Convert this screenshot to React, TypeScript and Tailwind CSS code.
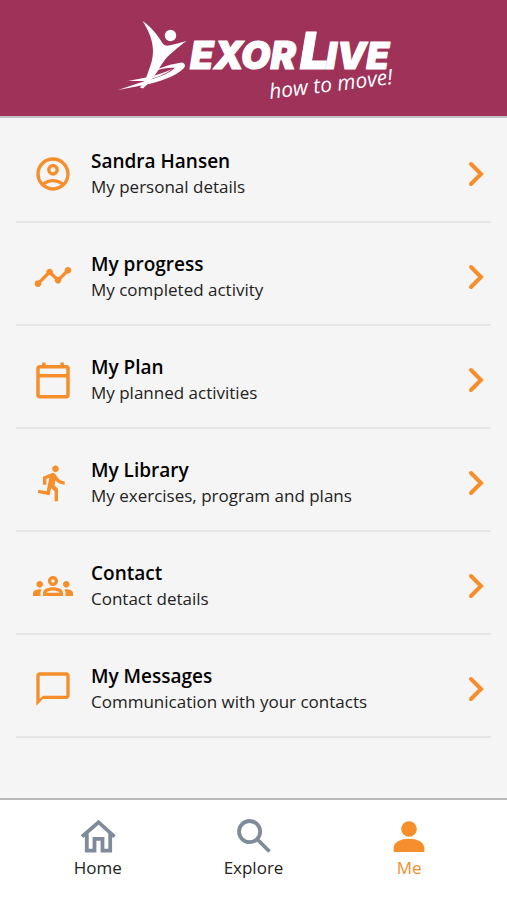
import React, { useState } from 'react';
import {
  MdChatBubbleOutline,
  MdDirectionsRun,
  MdOutlineAccountCircle,
  MdOutlineGroups,
  MdTimeline,
} from 'react-icons/md';

interface MenuItem {
  id: string;
  title: string;
  description: string;
  icon: React.ReactNode;
}

interface Tab {
  id: string;
  label: string;
  icon: React.ReactNode;
}

const CalendarIcon: React.FC = () => (
  <svg width="40" height="40" viewBox="0 0 24 24" fill="none" stroke="currentColor" strokeWidth="2.1" aria-hidden="true">
    <rect x="3" y="4" width="18" height="18" rx="1" />
    <path d="M3 9.500h18M6.500 1.500V4M17.500 1.500V4" />
  </svg>
);

const HomeIcon: React.FC = () => (
  <svg width="36" height="36" viewBox="0 0 36 36" fill="none" stroke="currentColor" strokeWidth="3.8" aria-hidden="true">
    <path d="M2 18.600 18.500 4.200l16 14.400" />
    <path d="M6.800 15.500v17.200h7.700V20.800h8v11.900h7.700V15.500" />
  </svg>
);

const SearchIcon: React.FC = () => (
  <svg width="36" height="36" viewBox="0 0 36 36" fill="none" stroke="currentColor" strokeWidth="3.8" aria-hidden="true">
    <circle cx="13.600" cy="13.600" r="10.600" />
    <path d="M21 21l12.500 12.500" />
  </svg>
);

const PersonIcon: React.FC = () => (
  <svg width="36" height="36" viewBox="0 0 36 36" fill="currentColor" aria-hidden="true">
    <circle cx="18" cy="11" r="7.800" />
    <path d="M2.600 30.500c0-6.400 7-9.700 15.400-9.700s15.400 3.300 15.400 9.700v1.900c0 1-.7 1.700-1.700 1.700H4.300c-1 0-1.700-.7-1.700-1.700z" />
  </svg>
);

const ChevronIcon: React.FC = () => (
  <svg className="shrink-0" width="16" height="28" viewBox="0 0 16 28" fill="none" stroke="currentColor" strokeWidth="4" strokeLinecap="round" aria-hidden="true">
    <path d="M3 4l10 10L3 24" />
  </svg>
);

const Logo: React.FC = () => (
  <svg width="280" height="90" viewBox="0 0 280 90" fill="white" role="img" aria-label="ExorLive how to move!">
    <circle cx="56.500" cy="20.500" r="5.700" />
    <path d="M28.500 6C36 11 43 19 48 27.500c2 3 4 3.500 7 3 6-1 11-3 17.500-4.500C67 30 63 33 60 36c-5 4-8 7-11 11.500-3 4-4 7-7 11-4 6-8 10-13 15l-3-1c4-5 6-9 8-15 3-8 5-14 5-21C39 26 35 16 28.500 6z" />
    <path d="M39 57c8-5 18-8 29-9.500 2.500.5 4 3 2 5.500C61 62 46 66.500 30 70L4 75l24-8c15-4 27-8 33-14.200-8-.3-15 1-22 4.200z" />
    <path d="M58 54c-6 5-14 8-23 10.500L30 66H14l18-3.500c9-1.800 18-4.500 26-8.500z" />
    <g fontFamily="Inter, sans-serif" fontWeight="900" fontStyle="italic" stroke="white" strokeWidth="1" strokeLinejoin="round">
      <text x="76" y="54" fontSize="38">EXOR</text>
      <text x="186" y="54" fontSize="51">L</text>
      <text x="212" y="54" fontSize="37">IVE</text>
    </g>
    <text x="156" y="84" fontFamily="Open Sans, sans-serif" fontSize="21" fontStyle="italic" transform="rotate(-7 156 84)">
      how to move!
    </text>
  </svg>
);

const menuItems: MenuItem[] = [
  { id: 'details', title: 'Sandra Hansen', description: 'My personal details', icon: <MdOutlineAccountCircle size={40} /> },
  { id: 'progress', title: 'My progress', description: 'My completed activity', icon: <MdTimeline size={40} /> },
  { id: 'plan', title: 'My Plan', description: 'My planned activities', icon: <CalendarIcon /> },
  { id: 'library', title: 'My Library', description: 'My exercises, program and plans', icon: <MdDirectionsRun size={40} /> },
  { id: 'contact', title: 'Contact', description: 'Contact details', icon: <MdOutlineGroups size={40} /> },
  { id: 'messages', title: 'My Messages', description: 'Communication with your contacts', icon: <MdChatBubbleOutline size={40} /> },
];

const tabs: Tab[] = [
  { id: 'home', label: 'Home', icon: <HomeIcon /> },
  { id: 'explore', label: 'Explore', icon: <SearchIcon /> },
  { id: 'me', label: 'Me', icon: <PersonIcon /> },
];

const App: React.FC = () => {
  const [activeTab, setActiveTab] = useState('me');

  return (
    <div className="flex min-h-screen flex-col bg-[#f5f5f5] font-['Open_Sans',sans-serif]">
      <header className="flex justify-center border-b-2 border-[#c4c0c1] bg-[#9e3259] pt-[15px] pb-[11px]">
        <Logo />
      </header>

      <main className="flex-1 px-4 pt-[2px]">
        <ul>
          {menuItems.map((item) => (
            <li key={item.id} className="border-b-2 border-[#e6e6e6]">
              <button type="button" className="flex w-full items-center pt-[7px] pr-[7px] pl-[17px] text-left text-[#f68e2b]">
                <span className="shrink-0">{item.icon}</span>
                <span className="ml-[18px] flex h-[94px] flex-1 flex-col justify-center">
                  <span className="text-[19px] leading-[25px] font-semibold text-black">{item.title}</span>
                  <span className="text-[17px] leading-[25px] text-[#222222]">{item.description}</span>
                </span>
                <ChevronIcon />
              </button>
            </li>
          ))}
        </ul>
      </main>

      <nav className="flex justify-around border-t-2 border-[#b9b9b9] bg-white px-5 pt-[18px] pb-5">
        {tabs.map((tab) => (
          <button
            key={tab.id}
            type="button"
            onClick={() => setActiveTab(tab.id)}
            className="flex flex-1 flex-col items-center gap-px"
          >
            <span className={activeTab === tab.id ? 'text-[#f68e2b]' : 'text-[#7f8b9b]'}>{tab.icon}</span>
            <span className={`text-[17px] leading-[25px] ${activeTab === tab.id ? 'text-[#f68e2b]' : 'text-[#222222]'}`}>
              {tab.label}
            </span>
          </button>
        ))}
      </nav>
    </div>
  );
};

export default App;
